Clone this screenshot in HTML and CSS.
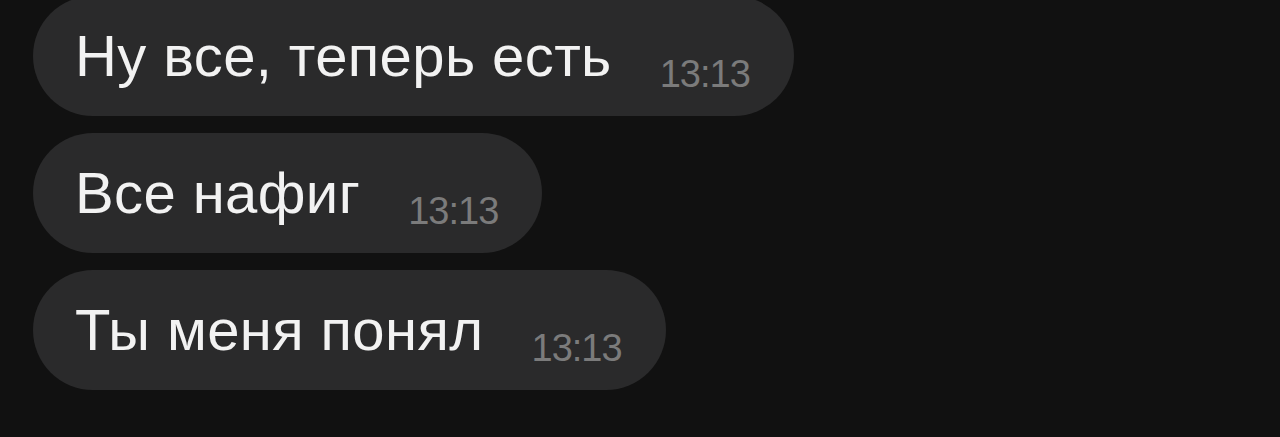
FILE: index.html
```html
<!DOCTYPE html>
<html>
<head>
    <title>Chat</title>
    <link rel="stylesheet" href="styles.css">
</head>
<body>
    <div class="chat">
        <div class="bubble">
            <span class="text">Ну все, теперь есть</span>
            <span class="time">13:13</span>
        </div>
        <div class="bubble">
            <span class="text">Все нафиг</span>
            <span class="time">13:13</span>
        </div>
        <div class="bubble">
            <span class="text">Ты меня понял</span>
            <span class="time">13:13</span>
        </div>
    </div>
</body>
</html>
```

FILE: styles.css
```css
html, body {
    margin: 0;
    height: 100%;
    background-color: #111111;
    overflow: hidden;
}

body {
    font-family: "Liberation Sans", Arial, sans-serif;
}

.chat {
    display: flex;
    flex-direction: column;
    align-items: flex-start;
    gap: 17px;
    margin-top: -4px;
    padding-left: 33px;
}

.bubble {
    display: flex;
    align-items: center;
    height: 120px;
    box-sizing: border-box;
    padding: 0 44px 0 42px;
    background-color: #2a2a2b;
    border-radius: 60px;
}

.text {
    color: #f2f2f2;
    font-size: 58px;
    line-height: 1;
    letter-spacing: 0.4px;
}

.time {
    color: #7b7b7b;
    font-size: 38px;
    line-height: 1;
    letter-spacing: -1px;
    margin-left: 48px;
    padding-top: 36px;
}
```
